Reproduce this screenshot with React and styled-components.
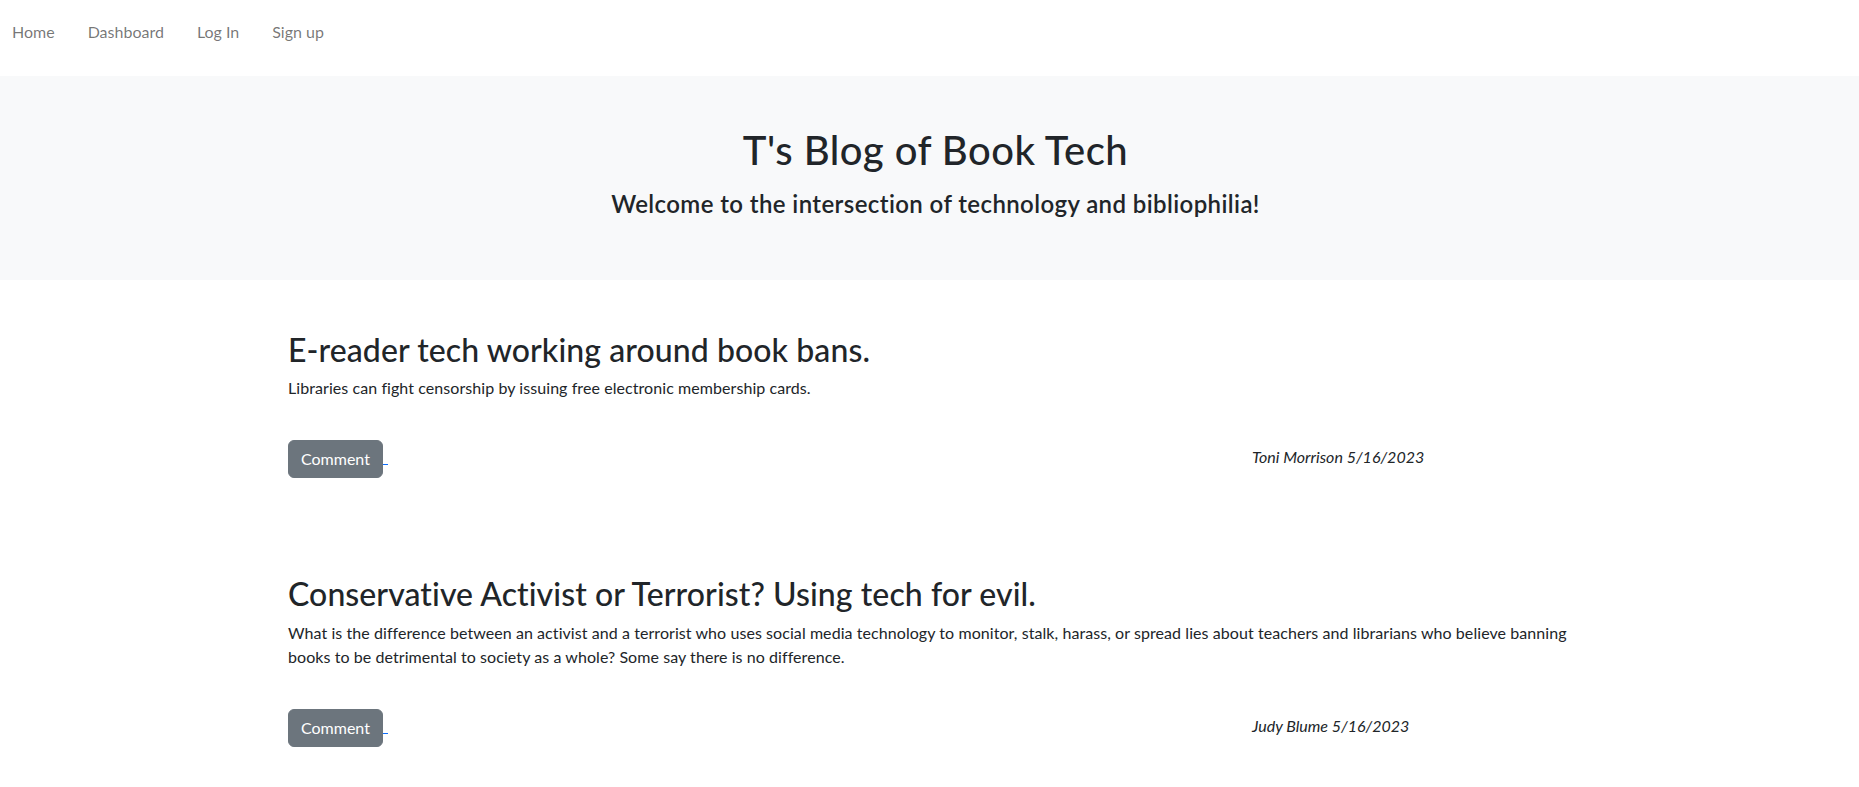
import React from "react";
import styled, { createGlobalStyle } from "styled-components";

const Global = createGlobalStyle`
  html, body { margin: 0; padding: 0; background: #fff; }
  body {
    font-family: Lato, "Open Sans", sans-serif;
    font-size: 16px;
    line-height: 24px;
    color: #212529;
  }
  * { box-sizing: border-box; }
`;

const Navbar = styled.nav`
  height: 76px;
  padding: 20px 0 0 12px;
  display: flex;
  gap: 33px;
`;

const NavLink = styled.a`
  color: rgba(0, 0, 0, 0.55);
  text-decoration: none;
  font-size: 16px;
  line-height: 24px;
`;

const Hero = styled.header`
  background: #f8f9fa;
  padding: 50px 0 61px 12px;
  text-align: center;
`;

const HeroTitle = styled.h1`
  margin: 0 0 16px;
  font-size: 40px;
  line-height: 48px;
  font-weight: 500;
  letter-spacing: 0.45px;
`;

const HeroSub = styled.h4`
  margin: 0;
  font-size: 24px;
  line-height: 28.8px;
  font-weight: 600;
  letter-spacing: 0.4px;
`;

const Main = styled.main`
  width: 1289px;
  margin: 0 0 0 288px;
  padding-top: 51px;
  display: flex;
  flex-direction: column;
  gap: 97px;
`;

const Post = styled.article`
  display: flex;
  flex-direction: column;
`;

const PostTitle = styled.h2`
  margin: 0 0 7px;
  font-size: 32px;
  line-height: 38.4px;
  font-weight: 500;
  letter-spacing: 0.08px;
`;

const PostBody = styled.p`
  margin: 0 0 40px;
  font-size: 16px;
  line-height: 24px;
  letter-spacing: 0.07px;
`;

const PostFooter = styled.div`
  display: grid;
  grid-template-columns: 964px 1fr;
  align-items: start;
`;

const Actions = styled.div`
  display: flex;
  align-items: flex-start;
`;

const CommentButton = styled.button`
  font-family: inherit;
  font-size: 16px;
  line-height: 24px;
  padding: 6px 12px;
  border: 1px solid #6c757d;
  background: #6c757d;
  color: #fff;
  border-radius: 6px;
  cursor: pointer;
`;

const LinkTail = styled.span`
  display: block;
  width: 5px;
  height: 1px;
  margin-top: 24px;
  background: #0d6efd;
`;

const Byline = styled.em`
  display: block;
  padding-top: 5px;
  font-style: italic;
  font-size: 16px;
  line-height: 24px;
`;

const posts = [
  {
    title: "E-reader tech working around book bans.",
    body: "Libraries can fight censorship by issuing free electronic membership cards.",
    author: "Toni Morrison",
    date: "5/16/2023",
  },
  {
    title: "Conservative Activist or Terrorist? Using tech for evil.",
    body: "What is the difference between an activist and a terrorist who uses social media technology to monitor, stalk, harass, or spread lies about teachers and librarians who believe banning books to be detrimental to society as a whole? Some say there is no difference.",
    author: "Judy Blume",
    date: "5/16/2023",
  },
];

export default function App() {
  return (
    <>
      <Global />
      <Navbar>
        <NavLink href="#">Home</NavLink>
        <NavLink href="#">Dashboard</NavLink>
        <NavLink href="#">Log In</NavLink>
        <NavLink href="#">Sign up</NavLink>
      </Navbar>
      <Hero>
        <HeroTitle>T's Blog of Book Tech</HeroTitle>
        <HeroSub>Welcome to the intersection of technology and bibliophilia!</HeroSub>
      </Hero>
      <Main>
        {posts.map((p) => (
          <Post key={p.title}>
            <PostTitle>{p.title}</PostTitle>
            <PostBody>{p.body}</PostBody>
            <PostFooter>
              <Actions>
                <CommentButton>Comment</CommentButton>
                <LinkTail />
              </Actions>
              <Byline>
                {p.author} {p.date}
              </Byline>
            </PostFooter>
          </Post>
        ))}
      </Main>
    </>
  );
}
